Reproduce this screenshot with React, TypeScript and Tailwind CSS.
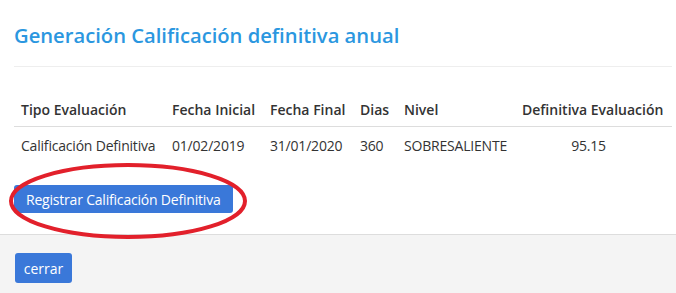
import React from 'react';

const font = { fontFamily: '"Open Sans", "Noto Sans", sans-serif' };

const cols = [
  { label: 'Tipo Evaluación', value: 'Calificación Definitiva', w: 'w-[151px]', center: false },
  { label: 'Fecha Inicial', value: '01/02/2019', w: 'w-[98px]', center: false },
  { label: 'Fecha Final', value: '31/01/2020', w: 'w-[90px]', center: false },
  { label: 'Dias', value: '360', w: 'w-[44px]', center: false },
  { label: 'Nivel', value: 'SOBRESALIENTE', w: 'w-[118px]', center: false },
  { label: 'Definitiva Evaluación', value: '95.15', w: 'w-[157px]', center: true },
];

export default function App() {
  return (
    <div className="w-[676px] h-[293px] bg-white overflow-hidden flex flex-col text-[#333]" style={font}>
      <div className="flex-1 pl-[14px] pr-[4px] relative">
        <div className="h-[67px] border-b border-[#eeeeee] flex items-center">
          <h2 className="text-[20.2px] leading-none font-semibold text-[#2b97e0] mt-[4px]">
            Generación Calificación definitiva anual
          </h2>
        </div>
        <table className="mt-[23px] table-fixed border-collapse text-[14px]">
          <thead>
            <tr className="border-b border-[#dddddd]">
              {cols.map((c) => (
                <th
                  key={c.label}
                  className={`${c.w} h-[36px] pl-[7px] pt-[3px] text-left font-semibold whitespace-nowrap`}
                >
                  {c.label}
                </th>
              ))}
            </tr>
          </thead>
          <tbody>
            <tr>
              {cols.map((c) => (
                <td
                  key={c.label}
                  className={`h-[38px] whitespace-nowrap tracking-[-0.2px] ${c.center ? 'text-center pr-[10px]' : 'text-left pl-[7px]'}`}
                >
                  {c.value}
                </td>
              ))}
            </tr>
          </tbody>
        </table>
        <div className="mt-[21px] relative">
          <button className="h-[28px] px-[12px] rounded-[3px] bg-[#3a78d9] text-white text-[14px] tracking-[-0.2px]">
            Registrar Calificación Definitiva
          </button>
          <svg className="absolute left-[-6px] top-[-23px] pointer-events-none" width="244" height="80" viewBox="0 0 244 80">
            <ellipse cx="120" cy="39" rx="117" ry="36" fill="none" stroke="#e2202b" strokeWidth="4" />
          </svg>
        </div>
      </div>
      <div className="h-[59px] bg-[#f4f4f4] border-t border-[#dddddd] pl-[15px] pt-[18px]">
        <button className="h-[30px] w-[57px] rounded-[3px] bg-[#3a78d9] text-white text-[14px]">cerrar</button>
      </div>
    </div>
  );
}
